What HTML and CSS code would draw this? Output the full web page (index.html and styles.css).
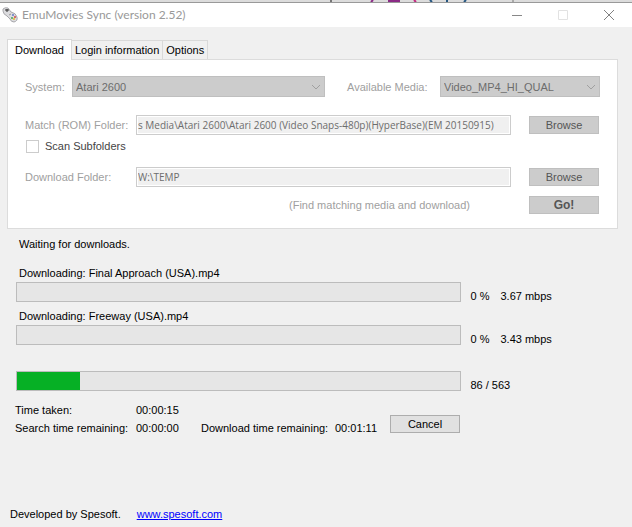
FILE: index.html
```html
<!DOCTYPE html>
<html lang="en">
<head>
  <meta charset="UTF-8">
  <meta name="viewport" content="width=device-width, initial-scale=1">
  <title>EmuMovies Sync (version 2.52)</title>
  <link rel="stylesheet" href="styles.css">
</head>
<body>
  <div class="backdrop" aria-hidden="true">
    <svg width="632" height="2" viewBox="0 0 632 2">
      <path d="M331 0v2" stroke="#111"/>
      <path d="M373 0l-2 2M388 1h12M392 0v2M397 0v2" stroke="#8b2a86" stroke-width="2"/>
      <path d="M414 0l2 2" stroke="#c2267e" stroke-width="2"/>
      <path d="M430 0l2 2M447 0v2M466 0l-2 2" stroke="#245580" stroke-width="2"/>
      <path d="M513 0v2" stroke="#777"/>
    </svg>
  </div>

  <header class="titlebar">
    <svg class="app-icon" width="16" height="16" viewBox="0 0 16 16" aria-hidden="true">
      <path d="M1 2Q3 0 6 1L9 5Q14 6 15 10Q16 14 12 15Q9 15 8 12L5 9Q1 7 1 4Z" fill="#dcdcdf" stroke="#a8a8ac"/>
      <path d="M3 3h4M5 2v3" stroke="#333"/>
      <path d="M7 8l2-1" stroke="#999"/>
      <circle cx="11" cy="8" r="1" fill="#6678c8"/>
      <circle cx="13" cy="10" r="1" fill="#d04848"/>
      <circle cx="10" cy="11" r="1" fill="#4ca65a"/>
      <circle cx="12" cy="12" r="1" fill="#e0bd30"/>
    </svg>
    <h1>EmuMovies Sync (version 2.52)</h1>
    <div class="window-buttons">
      <button type="button" aria-label="Minimize">
        <svg width="12" height="12" viewBox="0 0 12 12"><path d="M1 6.500h10" stroke="#888"/></svg>
      </button>
      <button type="button" aria-label="Maximize" disabled>
        <svg width="12" height="12" viewBox="0 0 12 12"><path d="M1.500 1.500h9v9h-9z" fill="none" stroke="#e2e2e2"/></svg>
      </button>
      <button type="button" aria-label="Close">
        <svg width="12" height="12" viewBox="0 0 12 12"><path d="M1 1l10 10M11 1L1 11" stroke="#808080"/></svg>
      </button>
    </div>
  </header>

  <main>
    <div class="tabs" role="tablist">
      <button type="button" class="tab active" role="tab" id="tab-download" aria-selected="true" aria-controls="download">Download</button>
      <button type="button" class="tab" role="tab" aria-selected="false">Login information</button>
      <button type="button" class="tab" role="tab" aria-selected="false">Options</button>
    </div>

    <form class="panel" id="download" role="tabpanel" aria-labelledby="tab-download">
      <div class="row select-row">
        <label for="system">System:</label>
        <div class="select-wrap system">
          <select id="system" disabled><option>Atari 2600</option></select>
          <svg class="chevron" width="10" height="6" viewBox="0 0 10 6"><path d="M1 1l4 4 4-4" fill="none" stroke="#a0a0a0"/></svg>
        </div>
        <label for="media" class="media-label">Available Media:</label>
        <div class="select-wrap media">
          <select id="media" disabled><option>Video_MP4_HI_QUAL</option></select>
          <svg class="chevron" width="10" height="6" viewBox="0 0 10 6"><path d="M1 1l4 4 4-4" fill="none" stroke="#a0a0a0"/></svg>
        </div>
      </div>

      <div class="row folder-row">
        <label for="rom">Match (ROM) Folder:</label>
        <input type="text" id="rom" disabled value="s Media\Atari 2600\Atari 2600 (Video Snaps-480p)(HyperBase)(EM 20150915)">
        <button type="button" class="btn" disabled>Browse</button>
      </div>

      <div class="check-row">
        <input type="checkbox" id="subfolders" disabled>
        <label for="subfolders">Scan Subfolders</label>
      </div>

      <div class="row folder-row">
        <label for="target">Download Folder:</label>
        <input type="text" id="target" disabled value="W:\TEMP">
        <button type="button" class="btn" disabled>Browse</button>
      </div>

      <div class="row go-row">
        <span>(Find matching media and download)</span>
        <button type="button" class="btn go" disabled>Go!</button>
      </div>
    </form>

    <section class="progress">
      <p class="status">Waiting for downloads.</p>

      <label for="file1">Downloading: Final Approach (USA).mp4</label>
      <div class="bar-row">
        <progress id="file1" value="0" max="100"></progress>
        <span class="percent">0 %</span>
        <span>3.67 mbps</span>
      </div>

      <label for="file2">Downloading: Freeway (USA).mp4</label>
      <div class="bar-row">
        <progress id="file2" value="0" max="100"></progress>
        <span class="percent">0 %</span>
        <span>3.43 mbps</span>
      </div>

      <div class="bar-row total">
        <progress value="80" max="563" aria-label="Total progress"></progress>
        <span>86 / 563</span>
      </div>
    </section>

    <section class="times">
      <span>Time taken:</span>
      <span>00:00:15</span>
      <span class="second-row">Search time remaining:</span>
      <span class="second-row">00:00:00</span>
      <span class="second-row">Download time remaining:</span>
      <span class="second-row">00:01:11</span>
      <button type="button" class="btn cancel">Cancel</button>
    </section>
  </main>

  <footer>
    <span>Developed by Spesoft.</span>
    <a href="http://www.spesoft.com">www.spesoft.com</a>
  </footer>
</body>
</html>
```
FILE: styles.css
```css
* {
  box-sizing: border-box;
}

body {
  display: flex;
  flex-direction: column;
  min-height: 100vh;
  margin: 0;
  background: #f0f0f0;
  color: #000;
  font-family: "Liberation Sans", Arial, sans-serif;
  font-size: 11px;
  line-height: 14px;
}

button, input, select {
  font: inherit;
}

.backdrop {
  height: 2px;
  overflow: hidden;
  background: #dcdcdc;
}

.backdrop svg {
  display: block;
}

.titlebar {
  display: flex;
  align-items: center;
  height: 25px;
  background: #fff;
  border-top: 1px solid #999;
}

.app-icon {
  margin: 0 4px 0 2px;
}

h1 {
  flex: 1;
  margin: 0;
  color: #999;
  font-family: Lato, sans-serif;
  font-size: 12px;
  font-weight: normal;
}

.window-buttons {
  display: flex;
}

.window-buttons button {
  display: flex;
  align-items: center;
  justify-content: center;
  width: 46px;
  height: 24px;
  padding: 0;
  border: 0;
  background: none;
}

main {
  padding: 12px 14px 0 7px;
}

.tabs {
  display: flex;
  align-items: flex-end;
  height: 21px;
}

.tab {
  height: 19px;
  margin-bottom: 1px;
  padding: 0 3px;
  background: #f0f0f0;
  border: 1px solid #d9d9d9;
  border-bottom: 0;
  border-left: 0;
  white-space: nowrap;
}

.tab.active {
  position: relative;
  height: 21px;
  margin-bottom: 0;
  padding: 0 7px;
  background: #fff;
  border-left: 1px solid #d9d9d9;
}

.panel {
  margin-top: -1px;
  padding: 16px 17px 14px;
  background: #fff;
  border: 1px solid #dcdcdc;
  color: #a0a0a0;
}

.row {
  display: flex;
  align-items: center;
}

.select-row {
  margin-bottom: 18px;
}

.select-row label {
  width: 47px;
}

.select-row .media-label {
  width: 93px;
}

.select-wrap {
  position: relative;
}

.system {
  flex: 1;
  margin-right: 22px;
}

.media {
  width: 160px;
}

select {
  display: block;
  width: 100%;
  height: 21px;
  padding: 0 3px;
  appearance: none;
  background: #ccc;
  border: 1px solid #bfbfbf;
  border-radius: 0;
  color: #6d6d6d;
  opacity: 1;
}

.chevron {
  position: absolute;
  top: 8px;
  right: 4px;
}

.folder-row label {
  width: 111px;
}

.folder-row input {
  flex: 1;
  min-width: 0;
  height: 20px;
  margin-right: 18px;
  padding: 0 1px;
  background: #f0f0f0;
  border: 1px solid #ccc;
  box-shadow: inset 0 0 0 1px #fff;
  color: #6d6d6d;
  font-family: "Open Sans", sans-serif;
  font-size: 10px;
}

.btn {
  width: 70px;
  height: 18px;
  padding: 0;
  background: #ccc;
  border: 1px solid #bfbfbf;
  color: #555;
}

.folder-row .btn, .go-row .btn {
  margin-right: 1px;
}

.check-row {
  display: flex;
  align-items: center;
  gap: 6px;
  height: 14px;
  margin: 4px 0 14px 1px;
  color: #444;
}

.check-row input {
  width: 13px;
  height: 13px;
  margin: 0;
  appearance: none;
  background: #fff;
  border: 1px solid #ccc;
}

.go-row {
  justify-content: flex-end;
  gap: 59px;
  margin-top: 9px;
}

.go {
  font-size: 12px;
  font-weight: bold;
}

.progress {
  padding: 8px 0 0 9px;
}

.progress label, .status {
  display: block;
  margin: 0 0 2px 3px;
}

.progress .status {
  margin-bottom: 15px;
}

.bar-row {
  display: flex;
  align-items: flex-end;
  height: 20px;
  margin-bottom: 7px;
}

progress {
  width: 74%;
  height: 20px;
  margin-right: 9px;
  appearance: none;
  background: #e6e6e6;
  border: 1px solid #bcbcbc;
}

progress::-webkit-progress-bar {
  background: #e6e6e6;
}

progress::-webkit-progress-value {
  background: #06b025;
}

.bar-row span {
  height: 13px;
}

.percent {
  width: 30px;
}

.total {
  margin: 26px 0 0;
}

.times {
  display: grid;
  grid-template-columns: 121px 65px 134px 55px 70px;
  grid-template-rows: 14px 14px;
  row-gap: 4px;
  padding: 12px 0 0 8px;
}

.second-row {
  grid-row: 2;
}

.cancel {
  grid-row: 1 / 3;
  grid-column: 5;
  align-self: end;
  margin-bottom: 2px;
  background: #e1e1e1;
  border-color: #adadad;
  color: #000;
}

footer {
  display: flex;
  gap: 16px;
  margin-top: auto;
  padding: 0 10px 6px;
}

footer a {
  color: #00f;
}
```
